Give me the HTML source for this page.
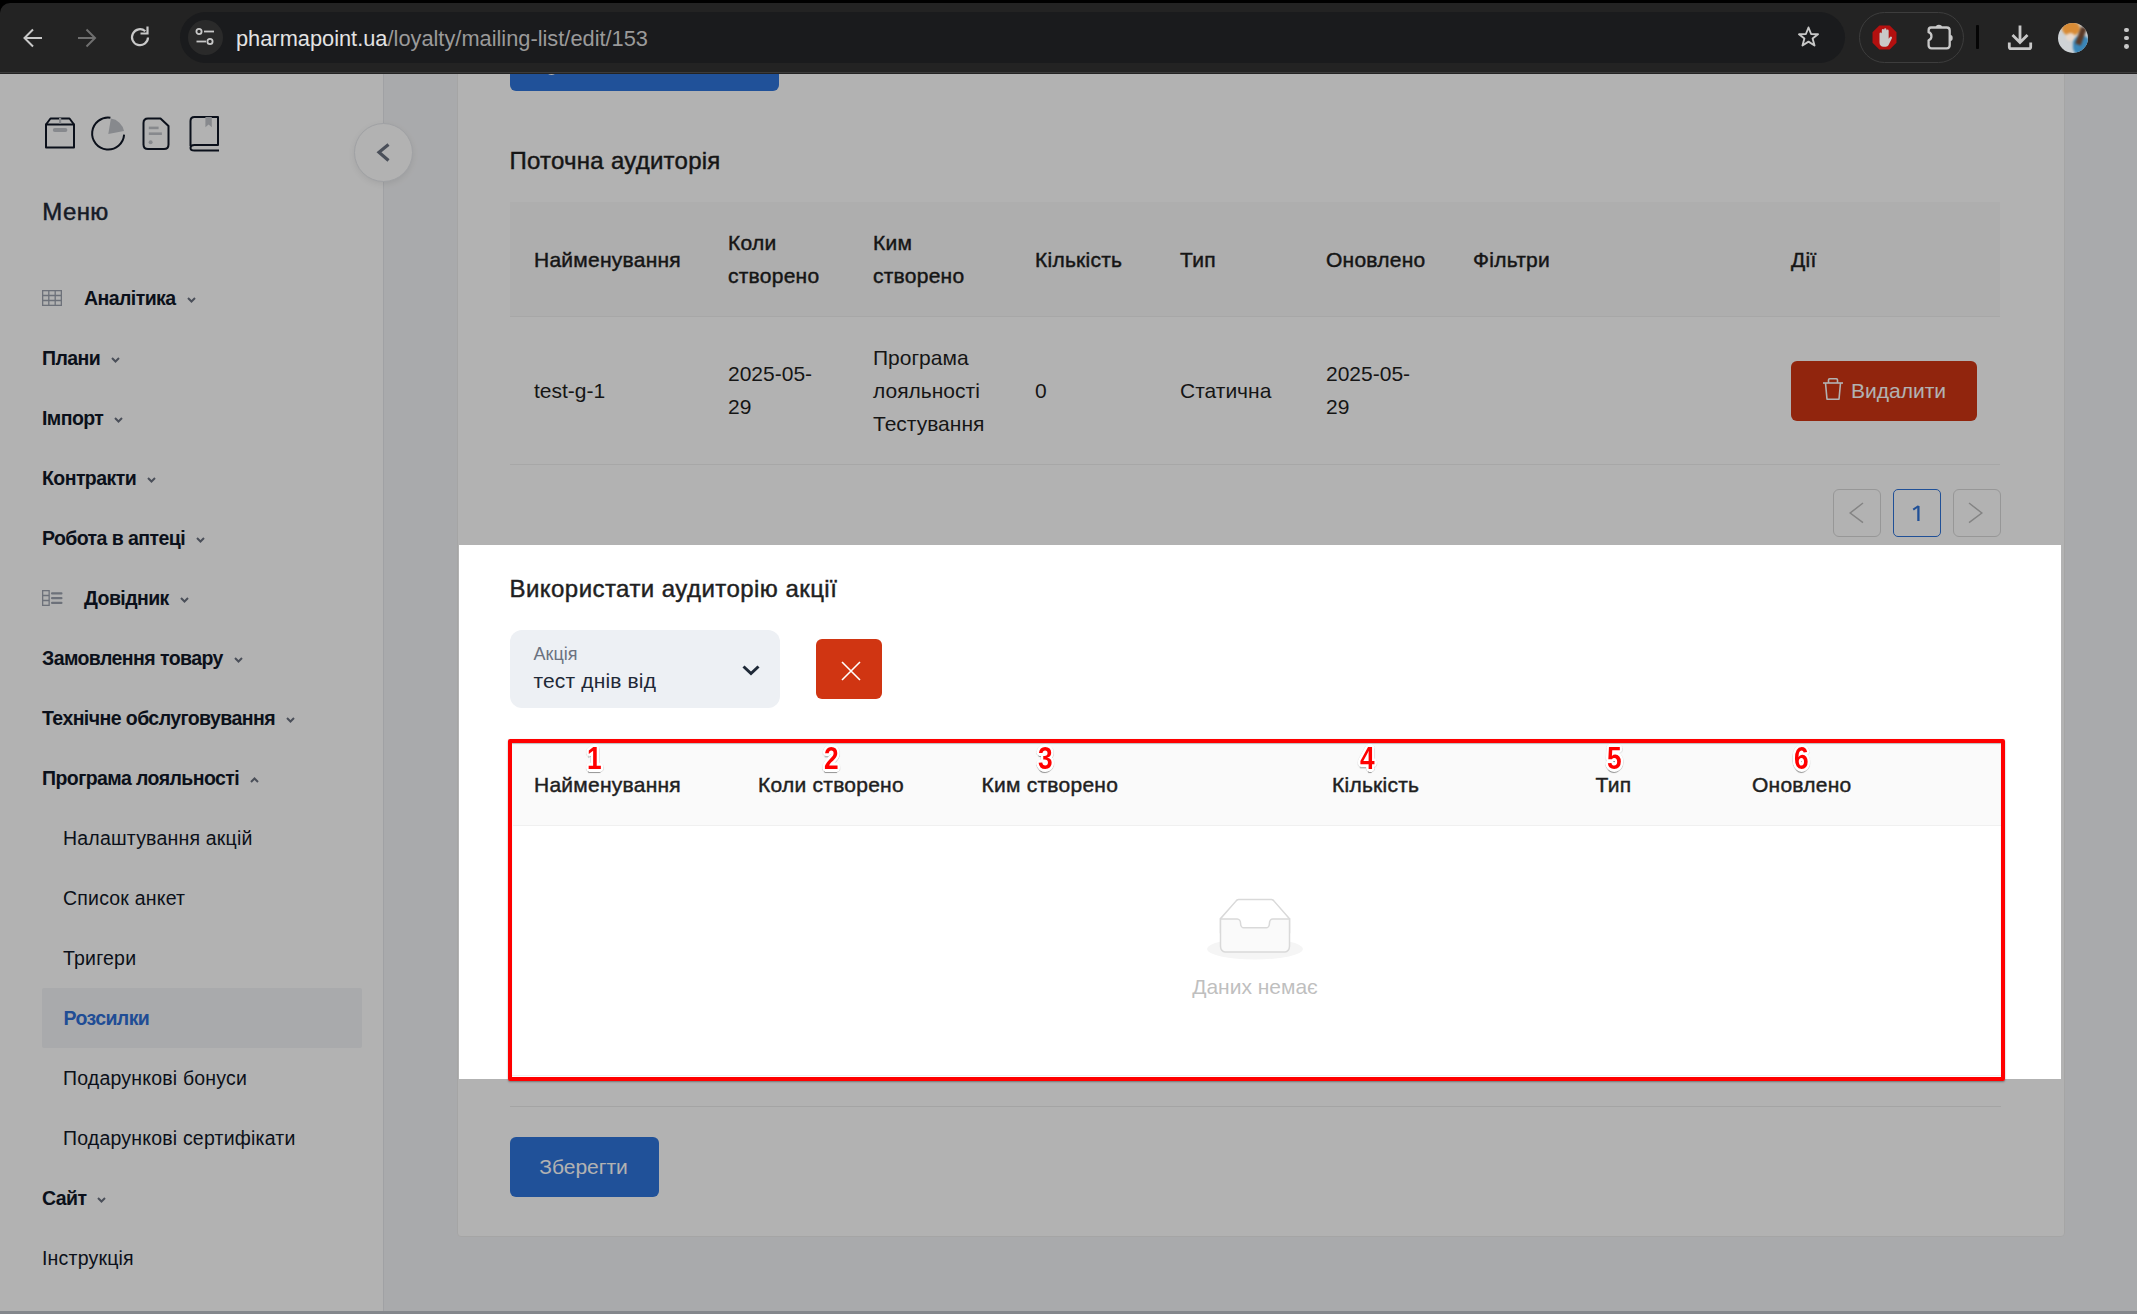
<!DOCTYPE html>
<html><head><meta charset="utf-8"><style>
*{box-sizing:border-box;margin:0;padding:0}
html,body{width:2137px;height:1314px;overflow:hidden;background:#f3f4f6;font-family:"Liberation Sans",sans-serif;color:#1f1f1f}
.a{position:absolute}
.nw{white-space:nowrap}
.med{-webkit-text-stroke:0.45px currentColor}
.hd{letter-spacing:0.25px}
</style></head><body>
<div class="a" style="left:0;top:74px;width:384px;height:1240px;background:#fff;border-right:1px solid #e5e7eb"></div>
<div class="a" style="left:457px;top:40px;width:1608px;height:1197px;background:#fff;border:1px solid #ededed;border-radius:0 0 4px 4px"></div>
<svg class="a" style="left:40px;top:112px" width="185" height="45" viewBox="40 112 185 45">
<g fill="none" stroke="#111827" stroke-width="2" stroke-linejoin="round">
<path d="M46 124.5 V147.5 H74 V124.5 Z"/>
<path d="M46 124.5 L50.5 118.5 H69.5 L74 124.5"/>
<path d="M110.4 117.7 A16 16 0 1 0 124.1 134.6"/>
<path d="M148 118.5 H160.5 L168.5 126 V144.5 Q168.5 149 164 149 H148 Q143.5 149 143.5 144.5 V123 Q143.5 118.5 148 118.5 Z"/>
<path d="M190.5 146 V121 Q190.5 117 194.5 117 H218 V145 H194.5 Q190.5 145 190.5 148 Q190.5 150.5 194.5 150.5 H219"/>
</g>
<g fill="#c2c5cb">
<rect x="52.8" y="128" width="14.6" height="4" rx="2"/>
<rect x="59" y="118" width="2.2" height="5.5"/>
<path d="M108.3 134 L110.9 118.6 A15.5 15.5 0 0 1 124 131 Z"/>
<rect x="148.8" y="126.6" width="9.8" height="2.6"/>
<rect x="148.8" y="132.4" width="13.1" height="2.6"/>
<circle cx="150.6" cy="142.2" r="2"/>
<path d="M205.4 117 H211.8 V127.3 L208.6 124.6 L205.4 127.3 Z"/>
</g></svg>
<div class="a" style="left:353.5px;top:122.5px;width:59px;height:59px;border-radius:50%;background:#fff;border:1px solid #e5e7eb;box-shadow:0 2px 6px rgba(0,0,0,0.08)"></div>
<svg class="a" style="left:370px;top:138px" width="26" height="28" viewBox="370 138 26 28"><path d="M388.5 144.5 L379 152.3 L388.5 160.5" fill="none" stroke="#6b7280" stroke-width="3.2"/></svg>
<div class="a nw med" style="left:42.30px;top:196.68px;font-size:24px;line-height:30px;color:#1f2937;letter-spacing:0.4px">Меню</div>
<div class="a nw" style="left:84px;top:285.84px;font-size:19.5px;line-height:24px;font-weight:700;letter-spacing:-0.57px;color:#111827">Аналітика<svg style="display:inline-block;margin-left:10px;vertical-align:1px" width="11" height="8" viewBox="-1 -0.5 11 8"><path d="M1 1.5 L4.5 5 L8 1.5" fill="none" stroke="#6b7280" stroke-width="2"/></svg></div>
<div class="a nw" style="left:42px;top:345.84px;font-size:19.5px;line-height:24px;font-weight:700;letter-spacing:-0.57px;color:#111827">Плани<svg style="display:inline-block;margin-left:10px;vertical-align:1px" width="11" height="8" viewBox="-1 -0.5 11 8"><path d="M1 1.5 L4.5 5 L8 1.5" fill="none" stroke="#6b7280" stroke-width="2"/></svg></div>
<div class="a nw" style="left:42px;top:405.84px;font-size:19.5px;line-height:24px;font-weight:700;letter-spacing:-0.57px;color:#111827">Імпорт<svg style="display:inline-block;margin-left:10px;vertical-align:1px" width="11" height="8" viewBox="-1 -0.5 11 8"><path d="M1 1.5 L4.5 5 L8 1.5" fill="none" stroke="#6b7280" stroke-width="2"/></svg></div>
<div class="a nw" style="left:42px;top:465.84px;font-size:19.5px;line-height:24px;font-weight:700;letter-spacing:-0.57px;color:#111827">Контракти<svg style="display:inline-block;margin-left:10px;vertical-align:1px" width="11" height="8" viewBox="-1 -0.5 11 8"><path d="M1 1.5 L4.5 5 L8 1.5" fill="none" stroke="#6b7280" stroke-width="2"/></svg></div>
<div class="a nw" style="left:42px;top:525.84px;font-size:19.5px;line-height:24px;font-weight:700;letter-spacing:-0.57px;color:#111827">Робота в аптеці<svg style="display:inline-block;margin-left:10px;vertical-align:1px" width="11" height="8" viewBox="-1 -0.5 11 8"><path d="M1 1.5 L4.5 5 L8 1.5" fill="none" stroke="#6b7280" stroke-width="2"/></svg></div>
<div class="a nw" style="left:84px;top:585.84px;font-size:19.5px;line-height:24px;font-weight:700;letter-spacing:-0.57px;color:#111827">Довідник<svg style="display:inline-block;margin-left:10px;vertical-align:1px" width="11" height="8" viewBox="-1 -0.5 11 8"><path d="M1 1.5 L4.5 5 L8 1.5" fill="none" stroke="#6b7280" stroke-width="2"/></svg></div>
<div class="a nw" style="left:42px;top:645.84px;font-size:19.5px;line-height:24px;font-weight:700;letter-spacing:-0.57px;color:#111827">Замовлення товару<svg style="display:inline-block;margin-left:10px;vertical-align:1px" width="11" height="8" viewBox="-1 -0.5 11 8"><path d="M1 1.5 L4.5 5 L8 1.5" fill="none" stroke="#6b7280" stroke-width="2"/></svg></div>
<div class="a nw" style="left:42px;top:705.84px;font-size:19.5px;line-height:24px;font-weight:700;letter-spacing:-0.57px;color:#111827">Технічне обслуговування<svg style="display:inline-block;margin-left:10px;vertical-align:1px" width="11" height="8" viewBox="-1 -0.5 11 8"><path d="M1 1.5 L4.5 5 L8 1.5" fill="none" stroke="#6b7280" stroke-width="2"/></svg></div>
<div class="a nw" style="left:42px;top:765.84px;font-size:19.5px;line-height:24px;font-weight:700;letter-spacing:-0.57px;color:#111827">Програма лояльності<svg style="display:inline-block;margin-left:10px;vertical-align:1px" width="11" height="8" viewBox="-1 -0.5 11 8"><path d="M1 5.5 L4.5 2 L8 5.5" fill="none" stroke="#6b7280" stroke-width="2"/></svg></div>
<svg class="a" style="left:42px;top:290px" width="20" height="16" viewBox="0 0 20 16"><g fill="none" stroke="#9ca3af" stroke-width="1.3"><rect x="0.65" y="0.65" width="18.7" height="14.7"/><path d="M0.65 5.5 H19.35 M0.65 10.5 H19.35 M6.8 0.65 V15.35 M13.2 0.65 V15.35"/></g></svg>
<svg class="a" style="left:42px;top:590px" width="21" height="16" viewBox="0 0 21 16"><g fill="none" stroke="#9ca3af" stroke-width="1.3"><rect x="0.65" y="0.65" width="6.5" height="14.7"/><path d="M0.65 5.5 H7.15 M0.65 10.5 H7.15"/></g><g fill="#9ca3af"><rect x="9" y="2.2" width="11.5" height="2.2" rx="1"/><rect x="9" y="7" width="11.5" height="2.2" rx="1"/><rect x="9" y="11.8" width="11.5" height="2.2" rx="1"/></g></svg>
<div class="a" style="left:42px;top:988px;width:320px;height:60px;background:#f3f4f6;border-radius:2px"></div>
<div class="a nw" style="left:63px;top:825.84px;font-size:19.5px;line-height:24px;color:#111827;letter-spacing:0.2px">Налаштування акцій</div>
<div class="a nw" style="left:63px;top:885.84px;font-size:19.5px;line-height:24px;color:#111827;letter-spacing:0.2px">Список анкет</div>
<div class="a nw" style="left:63px;top:945.84px;font-size:19.5px;line-height:24px;color:#111827;letter-spacing:0.2px">Тригери</div>
<div class="a nw" style="left:63.5px;top:1005.84px;font-size:19.5px;line-height:24px;font-weight:700;letter-spacing:-0.57px;color:#2f6fd6">Розсилки</div>
<div class="a nw" style="left:63px;top:1065.84px;font-size:19.5px;line-height:24px;color:#111827;letter-spacing:0.2px">Подарункові бонуси</div>
<div class="a nw" style="left:63px;top:1125.84px;font-size:19.5px;line-height:24px;color:#111827;letter-spacing:0.2px">Подарункові сертифікати</div>
<div class="a nw" style="left:42px;top:1185.84px;font-size:19.5px;line-height:24px;font-weight:700;letter-spacing:-0.57px;color:#111827">Сайт<svg style="display:inline-block;margin-left:10px;vertical-align:1px" width="11" height="8" viewBox="-1 -0.5 11 8"><path d="M1 1.5 L4.5 5 L8 1.5" fill="none" stroke="#6b7280" stroke-width="2"/></svg></div>
<div class="a nw" style="left:42px;top:1245.84px;font-size:19.5px;line-height:24px;color:#111827;letter-spacing:0.2px">Інструкція</div>
<div class="a" style="left:510px;top:40px;width:269px;height:51px;background:#2f75db;border-radius:6px"></div>
<div class="a" style="left:545px;top:62px;width:13px;height:13px;border-radius:50%;border:2px solid #fff"></div>
<div class="a nw med" style="left:509.5px;top:143.72px;font-size:24px;line-height:33px;color:#1f1f1f;letter-spacing:0.25px">Поточна аудиторія</div>
<div class="a" style="left:510px;top:202px;width:1490px;height:115px;background:#fafafa;border-bottom:1px solid #f0f0f0"></div>
<div class="a" style="left:510px;top:464px;width:1490px;height:1px;background:#f0f0f0"></div>
<div class="a nw med hd" style="left:534px;top:242.5px;font-size:21px;line-height:33px;color:#1f1f1f">Найменування</div>
<div class="a nw med hd" style="left:728px;top:226px;font-size:21px;line-height:33px;color:#1f1f1f">Коли<br>створено</div>
<div class="a nw med hd" style="left:873px;top:226px;font-size:21px;line-height:33px;color:#1f1f1f">Ким<br>створено</div>
<div class="a nw med hd" style="left:1035px;top:242.5px;font-size:21px;line-height:33px;color:#1f1f1f">Кількість</div>
<div class="a nw med hd" style="left:1180px;top:242.5px;font-size:21px;line-height:33px;color:#1f1f1f">Тип</div>
<div class="a nw med hd" style="left:1326px;top:242.5px;font-size:21px;line-height:33px;color:#1f1f1f">Оновлено</div>
<div class="a nw med hd" style="left:1473px;top:242.5px;font-size:21px;line-height:33px;color:#1f1f1f">Фільтри</div>
<div class="a nw med hd" style="left:1791px;top:242.5px;font-size:21px;line-height:33px;color:#1f1f1f">Дії</div>
<div class="a nw " style="left:534px;top:374px;font-size:21px;line-height:33px;color:#1f1f1f">test-g-1</div>
<div class="a nw " style="left:728px;top:357px;font-size:21px;line-height:33px;color:#1f1f1f">2025-05-<br>29</div>
<div class="a nw " style="left:873px;top:340.5px;font-size:21px;line-height:33px;color:#1f1f1f">Програма<br>лояльності<br>Тестування</div>
<div class="a nw " style="left:1035px;top:374px;font-size:21px;line-height:33px;color:#1f1f1f">0</div>
<div class="a nw " style="left:1180px;top:374px;font-size:21px;line-height:33px;color:#1f1f1f">Статична</div>
<div class="a nw " style="left:1326px;top:357px;font-size:21px;line-height:33px;color:#1f1f1f">2025-05-<br>29</div>
<div class="a" style="left:1791px;top:361px;width:186px;height:60px;background:#d03614;border-radius:6px"></div>
<svg class="a" style="left:1822px;top:377px" width="22" height="24" viewBox="0 0 22 24"><g fill="none" stroke="#fff" stroke-width="1.6" stroke-linejoin="round"><path d="M1 6 H21"/><path d="M6.5 6 V3 Q6.5 1.8 7.7 1.8 H14.3 Q15.5 1.8 15.5 3 V6"/><path d="M3.5 6 L5 22.2 H17 L18.5 6"/></g></svg>
<div class="a nw" style="left:1851px;top:374px;font-size:21px;line-height:33px;color:#fff">Видалити</div>
<div class="a" style="left:1833px;top:489px;width:48px;height:48px;border:1.5px solid #d9d9d9;border-radius:6px"></div>
<div class="a" style="left:1953px;top:489px;width:48px;height:48px;border:1.5px solid #d9d9d9;border-radius:6px"></div>
<svg class="a" style="left:1848px;top:502px" width="18" height="22" viewBox="0 0 18 22"><path d="M15 1 L2.2 11 L15 20.7" fill="none" stroke="#bdbdbd" stroke-width="1.5"/></svg>
<svg class="a" style="left:1966px;top:502px" width="18" height="22" viewBox="0 0 18 22"><path d="M3 1 L15.8 11 L3 20.7" fill="none" stroke="#bdbdbd" stroke-width="1.5"/></svg>
<div class="a" style="left:1893px;top:489px;width:48px;height:48px;border:1.6px solid #2f73d8;border-radius:5px"></div>
<svg class="a" style="left:1910px;top:504px" width="14" height="20" viewBox="0 0 14 20"><path d="M8.4 2 V17" stroke="#2f73d8" stroke-width="2.3" fill="none"/><path d="M3.2 5.6 L8.6 2" stroke="#2f73d8" stroke-width="2" fill="none"/></svg>
<div class="a" style="left:510px;top:1106px;width:1491px;height:1px;background:#ebebeb"></div>
<div class="a" style="left:510px;top:1137px;width:149px;height:60px;background:#2f75db;border-radius:6px"></div>
<div class="a nw" style="left:509px;top:1149.5px;width:149px;text-align:center;font-size:21px;line-height:33px;color:#fff">Зберегти</div>
<div class="a" style="left:459px;top:545px;width:1602px;height:534px;background:#fff"></div>
<div class="a nw med" style="left:509.5px;top:571.92px;font-size:24px;line-height:33px;color:#1f1f1f;letter-spacing:0.45px">Використати аудиторію акції</div>
<div class="a" style="left:510px;top:630px;width:270px;height:78px;background:#edf0f4;border-radius:12px"></div>
<div class="a nw " style="left:533.50px;top:642.96px;font-size:18px;line-height:22px;color:#6b7280;">Акція</div>
<div class="a nw " style="left:533.50px;top:668.02px;font-size:21px;line-height:26px;color:#1f2937;letter-spacing:0.15px">тест днів від</div>
<svg class="a" style="left:740px;top:663px" width="22" height="16" viewBox="0 0 22 16"><path d="M3.5 3.5 L11 10.5 L18.5 3.5" fill="none" stroke="#1f2937" stroke-width="3"/></svg>
<div class="a" style="left:816px;top:639px;width:66px;height:60px;background:#d03512;border-radius:6px"></div>
<svg class="a" style="left:840px;top:660px" width="22" height="22" viewBox="0 0 22 22"><path d="M2 2 L20 20 M20 2 L2 20" fill="none" stroke="#fff" stroke-width="1.6"/></svg>
<div class="a" style="left:513px;top:743px;width:1488px;height:83px;background:#fafafa;border-bottom:1px solid #f0f0f0"></div>
<div class="a" style="left:512px;top:1075px;width:1489px;height:1px;background:#f0f0f0"></div>
<div class="a nw med hd" style="left:534px;top:768.22px;font-size:21px;line-height:33px;color:#1f1f1f">Найменування</div>
<div class="a nw med hd" style="left:758px;top:768.22px;font-size:21px;line-height:33px;color:#1f1f1f">Коли створено</div>
<div class="a nw med hd" style="left:981.5px;top:768.22px;font-size:21px;line-height:33px;color:#1f1f1f">Ким створено</div>
<div class="a nw med hd" style="left:1332px;top:768.22px;font-size:21px;line-height:33px;color:#1f1f1f">Кількість</div>
<div class="a nw med hd" style="left:1595.5px;top:768.22px;font-size:21px;line-height:33px;color:#1f1f1f">Тип</div>
<div class="a nw med hd" style="left:1752px;top:768.22px;font-size:21px;line-height:33px;color:#1f1f1f">Оновлено</div>
<svg class="a" style="left:1207px;top:898px" width="96" height="63" viewBox="0 0 64 42"><g transform="translate(0 1)" fill="none" fill-rule="evenodd"><ellipse fill="#f5f5f5" cx="32" cy="33" rx="32" ry="7"/><g fill-rule="nonzero" stroke="#d9d9d9"><path d="M55 12.76L44.854 1.258C44.367.474 43.656 0 42.907 0H21.093c-.749 0-1.46.474-1.947 1.257L9 12.761V22h46v-9.24z"/><path d="M41.613 15.931c0-1.605.994-2.93 2.227-2.931H55v18.137C55 33.26 53.68 35 52.05 35h-40.1C10.32 35 9 33.259 9 31.137V13h11.16c1.233 0 2.227 1.323 2.227 2.928v.022c0 1.605 1.005 2.901 2.237 2.901h14.752c1.232 0 2.237-1.308 2.237-2.913v-.007z" fill="#fafafa"/></g></g></svg>
<div class="a nw" style="left:1155px;top:969.52px;width:200px;text-align:center;font-size:21px;line-height:33px;color:#bfbfbf">Даних немає</div>
<div class="a" style="left:0;top:74px;width:2137px;height:1240px;overflow:hidden"><div class="a" style="left:459px;top:471px;width:1602px;height:534px;box-shadow:0 0 0 4000px rgba(0,0,0,0.3)"></div></div>
<div class="a" style="left:508px;top:739px;width:1497px;height:342px;border:4px solid #ff0000;border-radius:2px;box-shadow:0 1px 2px rgba(0,0,0,0.35), inset 0 1px 1px rgba(0,0,0,0.25)"></div>
<div class="a nw" style="left:586.5px;top:742.5px;font-size:30.5px;line-height:30px;font-weight:700;color:#ff0000;transform:scaleX(0.86);transform-origin:0 0;text-shadow:2.60px 0.00px 0 #fff,2.40px 0.99px 0 #fff,1.84px 1.84px 0 #fff,0.99px 2.40px 0 #fff,0.00px 2.60px 0 #fff,-0.99px 2.40px 0 #fff,-1.84px 1.84px 0 #fff,-2.40px 0.99px 0 #fff,-2.60px 0.00px 0 #fff,-2.40px -0.99px 0 #fff,-1.84px -1.84px 0 #fff,-0.99px -2.40px 0 #fff,-0.00px -2.60px 0 #fff,0.99px -2.40px 0 #fff,1.84px -1.84px 0 #fff,2.40px -0.99px 0 #fff,3.30px 0.60px 0.8px rgba(0,0,0,0.10),2.86px 2.25px 0.8px rgba(0,0,0,0.10),1.65px 3.46px 0.8px rgba(0,0,0,0.10),0.00px 3.90px 0.8px rgba(0,0,0,0.10),-1.65px 3.46px 0.8px rgba(0,0,0,0.10),-2.86px 2.25px 0.8px rgba(0,0,0,0.10),-3.30px 0.60px 0.8px rgba(0,0,0,0.10),-2.86px -1.05px 0.8px rgba(0,0,0,0.10),-1.65px -2.26px 0.8px rgba(0,0,0,0.10),-0.00px -2.70px 0.8px rgba(0,0,0,0.10),1.65px -2.26px 0.8px rgba(0,0,0,0.10),2.86px -1.05px 0.8px rgba(0,0,0,0.10),-0.5px 3.6px 1px rgba(0,0,0,0.35)">1</div>
<div class="a nw" style="left:823.5px;top:742.5px;font-size:30.5px;line-height:30px;font-weight:700;color:#ff0000;transform:scaleX(0.86);transform-origin:0 0;text-shadow:2.60px 0.00px 0 #fff,2.40px 0.99px 0 #fff,1.84px 1.84px 0 #fff,0.99px 2.40px 0 #fff,0.00px 2.60px 0 #fff,-0.99px 2.40px 0 #fff,-1.84px 1.84px 0 #fff,-2.40px 0.99px 0 #fff,-2.60px 0.00px 0 #fff,-2.40px -0.99px 0 #fff,-1.84px -1.84px 0 #fff,-0.99px -2.40px 0 #fff,-0.00px -2.60px 0 #fff,0.99px -2.40px 0 #fff,1.84px -1.84px 0 #fff,2.40px -0.99px 0 #fff,3.30px 0.60px 0.8px rgba(0,0,0,0.10),2.86px 2.25px 0.8px rgba(0,0,0,0.10),1.65px 3.46px 0.8px rgba(0,0,0,0.10),0.00px 3.90px 0.8px rgba(0,0,0,0.10),-1.65px 3.46px 0.8px rgba(0,0,0,0.10),-2.86px 2.25px 0.8px rgba(0,0,0,0.10),-3.30px 0.60px 0.8px rgba(0,0,0,0.10),-2.86px -1.05px 0.8px rgba(0,0,0,0.10),-1.65px -2.26px 0.8px rgba(0,0,0,0.10),-0.00px -2.70px 0.8px rgba(0,0,0,0.10),1.65px -2.26px 0.8px rgba(0,0,0,0.10),2.86px -1.05px 0.8px rgba(0,0,0,0.10),-0.5px 3.6px 1px rgba(0,0,0,0.35)">2</div>
<div class="a nw" style="left:1038.0px;top:742.5px;font-size:30.5px;line-height:30px;font-weight:700;color:#ff0000;transform:scaleX(0.86);transform-origin:0 0;text-shadow:2.60px 0.00px 0 #fff,2.40px 0.99px 0 #fff,1.84px 1.84px 0 #fff,0.99px 2.40px 0 #fff,0.00px 2.60px 0 #fff,-0.99px 2.40px 0 #fff,-1.84px 1.84px 0 #fff,-2.40px 0.99px 0 #fff,-2.60px 0.00px 0 #fff,-2.40px -0.99px 0 #fff,-1.84px -1.84px 0 #fff,-0.99px -2.40px 0 #fff,-0.00px -2.60px 0 #fff,0.99px -2.40px 0 #fff,1.84px -1.84px 0 #fff,2.40px -0.99px 0 #fff,3.30px 0.60px 0.8px rgba(0,0,0,0.10),2.86px 2.25px 0.8px rgba(0,0,0,0.10),1.65px 3.46px 0.8px rgba(0,0,0,0.10),0.00px 3.90px 0.8px rgba(0,0,0,0.10),-1.65px 3.46px 0.8px rgba(0,0,0,0.10),-2.86px 2.25px 0.8px rgba(0,0,0,0.10),-3.30px 0.60px 0.8px rgba(0,0,0,0.10),-2.86px -1.05px 0.8px rgba(0,0,0,0.10),-1.65px -2.26px 0.8px rgba(0,0,0,0.10),-0.00px -2.70px 0.8px rgba(0,0,0,0.10),1.65px -2.26px 0.8px rgba(0,0,0,0.10),2.86px -1.05px 0.8px rgba(0,0,0,0.10),-0.5px 3.6px 1px rgba(0,0,0,0.35)">3</div>
<div class="a nw" style="left:1360.0px;top:742.5px;font-size:30.5px;line-height:30px;font-weight:700;color:#ff0000;transform:scaleX(0.86);transform-origin:0 0;text-shadow:2.60px 0.00px 0 #fff,2.40px 0.99px 0 #fff,1.84px 1.84px 0 #fff,0.99px 2.40px 0 #fff,0.00px 2.60px 0 #fff,-0.99px 2.40px 0 #fff,-1.84px 1.84px 0 #fff,-2.40px 0.99px 0 #fff,-2.60px 0.00px 0 #fff,-2.40px -0.99px 0 #fff,-1.84px -1.84px 0 #fff,-0.99px -2.40px 0 #fff,-0.00px -2.60px 0 #fff,0.99px -2.40px 0 #fff,1.84px -1.84px 0 #fff,2.40px -0.99px 0 #fff,3.30px 0.60px 0.8px rgba(0,0,0,0.10),2.86px 2.25px 0.8px rgba(0,0,0,0.10),1.65px 3.46px 0.8px rgba(0,0,0,0.10),0.00px 3.90px 0.8px rgba(0,0,0,0.10),-1.65px 3.46px 0.8px rgba(0,0,0,0.10),-2.86px 2.25px 0.8px rgba(0,0,0,0.10),-3.30px 0.60px 0.8px rgba(0,0,0,0.10),-2.86px -1.05px 0.8px rgba(0,0,0,0.10),-1.65px -2.26px 0.8px rgba(0,0,0,0.10),-0.00px -2.70px 0.8px rgba(0,0,0,0.10),1.65px -2.26px 0.8px rgba(0,0,0,0.10),2.86px -1.05px 0.8px rgba(0,0,0,0.10),-0.5px 3.6px 1px rgba(0,0,0,0.35)">4</div>
<div class="a nw" style="left:1607.0px;top:742.5px;font-size:30.5px;line-height:30px;font-weight:700;color:#ff0000;transform:scaleX(0.86);transform-origin:0 0;text-shadow:2.60px 0.00px 0 #fff,2.40px 0.99px 0 #fff,1.84px 1.84px 0 #fff,0.99px 2.40px 0 #fff,0.00px 2.60px 0 #fff,-0.99px 2.40px 0 #fff,-1.84px 1.84px 0 #fff,-2.40px 0.99px 0 #fff,-2.60px 0.00px 0 #fff,-2.40px -0.99px 0 #fff,-1.84px -1.84px 0 #fff,-0.99px -2.40px 0 #fff,-0.00px -2.60px 0 #fff,0.99px -2.40px 0 #fff,1.84px -1.84px 0 #fff,2.40px -0.99px 0 #fff,3.30px 0.60px 0.8px rgba(0,0,0,0.10),2.86px 2.25px 0.8px rgba(0,0,0,0.10),1.65px 3.46px 0.8px rgba(0,0,0,0.10),0.00px 3.90px 0.8px rgba(0,0,0,0.10),-1.65px 3.46px 0.8px rgba(0,0,0,0.10),-2.86px 2.25px 0.8px rgba(0,0,0,0.10),-3.30px 0.60px 0.8px rgba(0,0,0,0.10),-2.86px -1.05px 0.8px rgba(0,0,0,0.10),-1.65px -2.26px 0.8px rgba(0,0,0,0.10),-0.00px -2.70px 0.8px rgba(0,0,0,0.10),1.65px -2.26px 0.8px rgba(0,0,0,0.10),2.86px -1.05px 0.8px rgba(0,0,0,0.10),-0.5px 3.6px 1px rgba(0,0,0,0.35)">5</div>
<div class="a nw" style="left:1793.5px;top:742.5px;font-size:30.5px;line-height:30px;font-weight:700;color:#ff0000;transform:scaleX(0.86);transform-origin:0 0;text-shadow:2.60px 0.00px 0 #fff,2.40px 0.99px 0 #fff,1.84px 1.84px 0 #fff,0.99px 2.40px 0 #fff,0.00px 2.60px 0 #fff,-0.99px 2.40px 0 #fff,-1.84px 1.84px 0 #fff,-2.40px 0.99px 0 #fff,-2.60px 0.00px 0 #fff,-2.40px -0.99px 0 #fff,-1.84px -1.84px 0 #fff,-0.99px -2.40px 0 #fff,-0.00px -2.60px 0 #fff,0.99px -2.40px 0 #fff,1.84px -1.84px 0 #fff,2.40px -0.99px 0 #fff,3.30px 0.60px 0.8px rgba(0,0,0,0.10),2.86px 2.25px 0.8px rgba(0,0,0,0.10),1.65px 3.46px 0.8px rgba(0,0,0,0.10),0.00px 3.90px 0.8px rgba(0,0,0,0.10),-1.65px 3.46px 0.8px rgba(0,0,0,0.10),-2.86px 2.25px 0.8px rgba(0,0,0,0.10),-3.30px 0.60px 0.8px rgba(0,0,0,0.10),-2.86px -1.05px 0.8px rgba(0,0,0,0.10),-1.65px -2.26px 0.8px rgba(0,0,0,0.10),-0.00px -2.70px 0.8px rgba(0,0,0,0.10),1.65px -2.26px 0.8px rgba(0,0,0,0.10),2.86px -1.05px 0.8px rgba(0,0,0,0.10),-0.5px 3.6px 1px rgba(0,0,0,0.35)">6</div>

<div class="a" style="left:0;top:0;width:2137px;height:74px;background:#000"></div>
<div class="a" style="left:0;top:3px;width:2137px;height:71px;background:#232323;border-radius:10px 0 0 0"></div>
<div class="a" style="left:0;top:72px;width:2137px;height:1px;background:#3b3b3b"></div>
<svg class="a" style="left:20px;top:25px" width="26" height="26" viewBox="0 0 26 26"><path d="M13 4.5 L4.5 13 L13 21.5 M5 13 H22" fill="none" stroke="#c8c8c8" stroke-width="2"/></svg>
<svg class="a" style="left:74px;top:25px" width="26" height="26" viewBox="0 0 26 26"><path d="M12.5 4.5 L21 13 L12.5 21.5 M20.5 13 H4" fill="none" stroke="#6f6f6f" stroke-width="2"/></svg>
<svg class="a" style="left:128px;top:25px" width="26" height="24" viewBox="0 0 26 24"><path d="M20 12.5 A8 8 0 1 1 17.3 6.2" fill="none" stroke="#c8c8c8" stroke-width="2.2"/><path d="M12.5 5.5 H19.5 V-1.5" fill="none" stroke="#c8c8c8" stroke-width="2.2" transform="translate(0 3)"/></svg>
<div class="a" style="left:180px;top:12px;width:1665px;height:51px;border-radius:26px;background:#1a1b1d"></div>
<div class="a" style="left:188px;top:20px;width:35px;height:35px;border-radius:50%;background:#2a2a2a"></div>
<svg class="a" style="left:195px;top:27px" width="22" height="22" viewBox="0 0 22 22"><circle cx="4" cy="4.5" r="2.6" fill="none" stroke="#c8c8c8" stroke-width="1.8"/><path d="M9 4.5 H19" stroke="#c8c8c8" stroke-width="1.8"/><circle cx="15" cy="14.5" r="2.6" fill="none" stroke="#c8c8c8" stroke-width="1.8"/><path d="M1.5 14.5 H11" stroke="#c8c8c8" stroke-width="1.8"/></svg>
<div class="a nw" style="left:236px;top:24.5px;font-size:21.8px;line-height:28px;color:#9a9a9a"><span style="color:#e3e3e3">pharmapoint.ua</span>/loyalty/mailing-list/edit/153</div>
<svg class="a" style="left:1796px;top:25px" width="25" height="24" viewBox="0 0 24 24"><path d="M12 2.5 L14.6 9 L21.5 9.3 L16.1 13.6 L18 20.5 L12 16.6 L6 20.5 L7.9 13.6 L2.5 9.3 L9.4 9 Z" fill="none" stroke="#c8c8c8" stroke-width="1.9" stroke-linejoin="round"/></svg>
<div class="a" style="left:1859px;top:12px;width:105px;height:51px;border-radius:26px;border:1px solid #3d3d3d"></div>
<svg class="a" style="left:1872px;top:25px" width="25" height="25" viewBox="0 0 24 24"><path d="M7 0.5 H17 L23.5 7 V17 L17 23.5 H7 L0.5 17 V7 Z" fill="#b3100f"/><path d="M7.2 15.5 V8.2 a1.1 1.1 0 0 1 2.2 0 V11 V5 a1.1 1.1 0 0 1 2.2 0 V11 V4.2 a1.1 1.1 0 0 1 2.2 0 V11 V5.4 a1.1 1.1 0 0 1 2.2 0 V13.2 L17.3 11.4 a1.1 1.1 0 0 1 1.8 1.2 L15.8 19.5 Q15 20.8 13.2 20.8 H11.2 Q7.2 20.8 7.2 16.5 Z" fill="#c9c9c9"/></svg>
<svg class="a" style="left:1924px;top:20px" width="34" height="34" viewBox="1924 20 34 34"><path d="M1931 27.5 H1946.7 Q1949.7 27.5 1949.7 30.5 V45.3 Q1949.7 48.3 1946.7 48.3 H1931.6 Q1928.6 48.3 1928.6 45.3 V40.3 A4.3 4.3 0 0 0 1928.6 32.2 V30.5 Q1928.6 27.5 1931 27.5 Z" fill="none" stroke="#c8c8c8" stroke-width="2.3" stroke-linejoin="round"/><path d="M1935.6 28 A3.3 3.3 0 0 1 1942.2 28 Z" fill="#c8c8c8"/><path d="M1949.5 34.8 A3.2 3.2 0 0 1 1949.5 41.2 Z" fill="#c8c8c8"/></svg>
<div class="a" style="left:1976px;top:25px;width:3px;height:24px;background:#050505;border-radius:1px"></div>
<svg class="a" style="left:2004px;top:22px" width="32" height="32" viewBox="2004 22 32 32"><path d="M2020 25.5 V42 M2012.5 35 L2020 42.5 L2027.5 35" fill="none" stroke="#c8c8c8" stroke-width="2.8"/><path d="M2009.3 42.5 V47 Q2009.3 48.7 2011 48.7 H2029 Q2030.7 48.7 2030.7 47 V42.5" fill="none" stroke="#c8c8c8" stroke-width="2.8"/></svg>
<div class="a" style="left:2058px;top:22.5px;width:30px;height:30px;border-radius:50%;overflow:hidden;background:#cfd3d6"><div class="a" style="left:0;top:0;width:30px;height:30px;filter:blur(0.8px)"><div class="a" style="left:4px;top:-2px;width:18px;height:15px;border-radius:50%;background:#d88b35"></div><div class="a" style="left:15px;top:13px;width:17px;height:19px;border-radius:40%;background:#3a86b8"></div><div class="a" style="left:20px;top:4px;width:6px;height:18px;background:#5a3a28;transform:rotate(20deg)"></div><div class="a" style="left:8px;top:10px;width:9px;height:8px;border-radius:50%;background:#e9d9cc"></div></div></div>
<div class="a" style="left:2124px;top:27.5px;width:4.8px;height:4.8px;border-radius:50%;background:#c8c8c8"></div>
<div class="a" style="left:2124px;top:35.7px;width:4.8px;height:4.8px;border-radius:50%;background:#c8c8c8"></div>
<div class="a" style="left:2124px;top:43.9px;width:4.8px;height:4.8px;border-radius:50%;background:#c8c8c8"></div>
<div class="a" style="left:0;top:1311px;width:2137px;height:3px;background:#84878c"></div>
</body></html>
